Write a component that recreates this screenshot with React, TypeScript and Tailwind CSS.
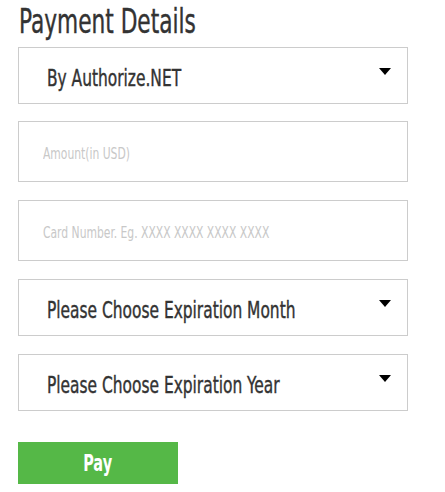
import React from "react";

const Caret = () => (
  <svg width="12" height="7" viewBox="0 0 12 7" className="mb-[8px] shrink-0">
    <path d="M0 0 L12 0 L6 7 Z" fill="#000" />
  </svg>
);

const SelectBox = ({ label, className = "" }: { label: string; className?: string }) => (
  <div
    className={`flex h-[57px] w-[390px] items-center border border-[#cccccc] bg-white pl-[28px] pr-[16px] ${className}`}
  >
    <div className="min-w-0 flex-1 pt-[7px]">
      <span className="block w-max origin-left scale-x-[0.73] whitespace-nowrap text-[23.5px] leading-none text-[#333333] [-webkit-text-stroke:0.4px_#333333]">
        {label}
      </span>
    </div>
    <Caret />
  </div>
);

const InputBox = ({ placeholder, className = "" }: { placeholder: string; className?: string }) => (
  <div className={`flex h-[61px] w-[390px] items-center border border-[#cccccc] bg-white pl-[24px] ${className}`}>
    <span className="block w-max origin-left scale-x-[0.73] whitespace-nowrap pt-[6px] text-[16.4px] leading-none text-[#c8c8c8]">
      {placeholder}
    </span>
  </div>
);

export default function App() {
  return (
    <div
      className="min-h-[492px] w-[445px] bg-white pl-[18px] pt-[5px]"
      style={{ fontFamily: '"Liberation Sans Narrow", "DejaVu Sans Condensed", Roboto, sans-serif' }}
    >
      <h1 className="ml-[1px] block w-max origin-left scale-x-[0.73] whitespace-nowrap text-[33px] leading-none text-[#333333] [-webkit-text-stroke:0.4px_#333333]">
        Payment Details
      </h1>
      <div className="mt-[9px] flex flex-col">
        <SelectBox label="By Authorize.NET" />
        <InputBox placeholder="Amount(in USD)" className="mt-[17px]" />
        <InputBox placeholder="Card Number. Eg. XXXX XXXX XXXX XXXX" className="mt-[18px]" />
        <SelectBox label="Please Choose Expiration Month" className="mt-[18px]" />
        <SelectBox label="Please Choose Expiration Year" className="mt-[18px]" />
      </div>
      <button className="mt-[31px] flex h-[42px] w-[160px] items-center justify-center bg-[#55b847] text-white">
        <span className="block scale-x-[0.7] text-[23px] font-bold leading-none">Pay</span>
      </button>
    </div>
  );
}
